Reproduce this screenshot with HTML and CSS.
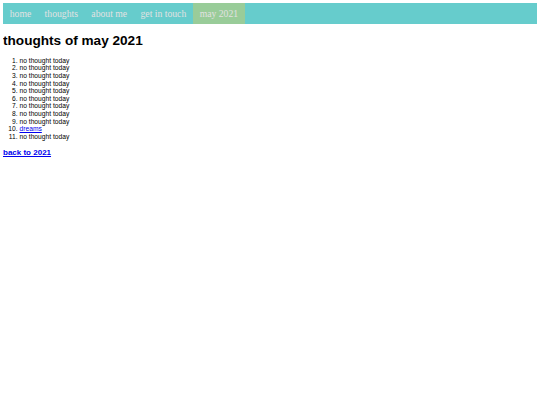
FILE: index.html
```html
<!DOCTYPE html>
<html lang="en">

<head>
    <meta charset="UTF-8">
    <meta name="viewport" content="width=device-width, initial-scale=1.0">
    <title>thoughts of may 2021</title>
    <link rel="stylesheet" href="styles.css">
</head>

<body>
    <!-- top navigation -->
    <ul class="nav">
        <li><a href="#">home</a></li>
        <li><a href="#">thoughts</a></li>
        <li><a href="#">about me</a></li>
        <li><a href="#">get in touch</a></li>
        <li><a class="active" href="#">may 2021</a></li>
    </ul>

    <h1>thoughts of may 2021</h1>

    <ol class="days">
        <li>no thought today</li>
        <li>no thought today</li>
        <li>no thought today</li>
        <li>no thought today</li>
        <li>no thought today</li>
        <li>no thought today</li>
        <li>no thought today</li>
        <li>no thought today</li>
        <li>no thought today</li>
        <li><a href="#">dreams</a></li>
        <li>no thought today</li>
    </ol>

    <h3><a href="#">back to 2021</a></h3>
</body>

</html>
```

FILE: styles.css
```css
body {
    margin: 3px;
    font-family: "Liberation Sans", Arial, sans-serif;
    font-size: 6.7px;
    line-height: 7.6px;
    color: #000;
}

a {
    color: #0000ee;
}

.nav {
    list-style-type: none;
    margin: 0;
    padding: 0;
    display: flex;
    height: 21px;
    background-color: #66cccc;
}

.nav li a {
    display: block;
    padding: 0 6.7px;
    line-height: 21px;
    font-family: "Liberation Serif", "Times New Roman", serif;
    font-size: 9.7px;
    color: #e2e2e2;
    text-decoration: none;
}

.nav li a.active {
    background-color: #99cc99;
}

h1 {
    font-size: 13.6px;
    line-height: 15.6px;
    margin: 8.6px 0;
}

.days {
    margin: 7.4px 0;
    padding-left: 16.5px;
}

h3 {
    font-size: 8px;
    line-height: 9px;
    margin: 7.4px 0;
}
```
